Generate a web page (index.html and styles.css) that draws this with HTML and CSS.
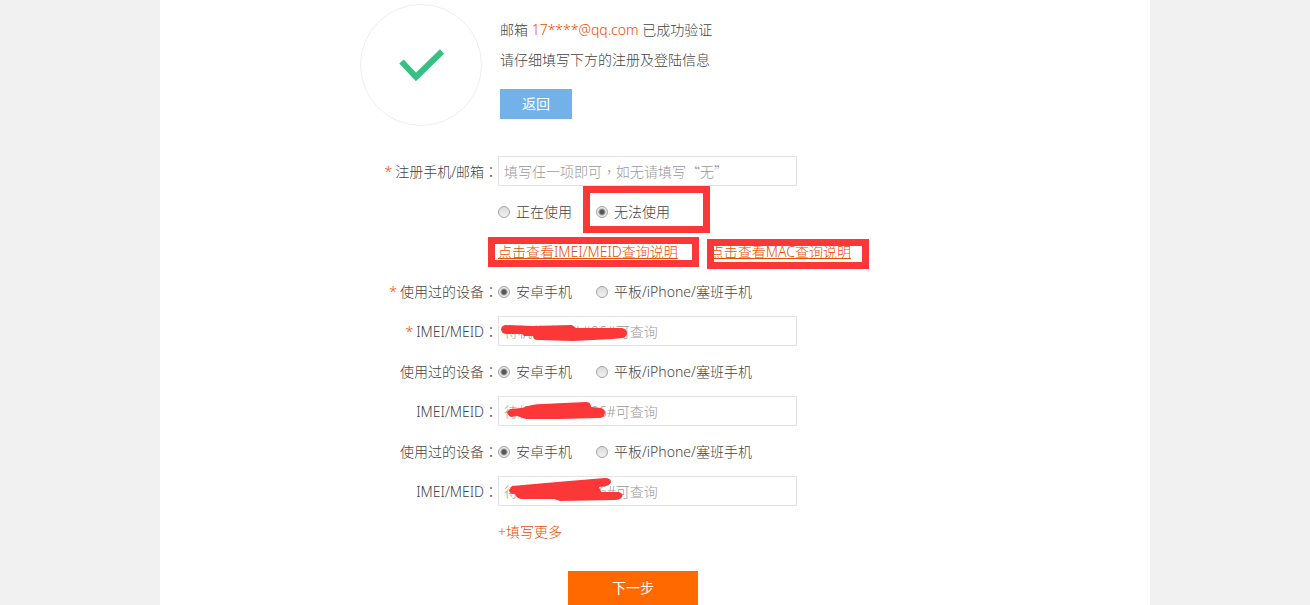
FILE: index.html
```html
<!DOCTYPE html>
<html lang="zh-CN">

<head>
    <meta charset="UTF-8">
    <meta name="viewport" content="width=device-width, initial-scale=1.0">
    <title>填写注册及登陆信息</title>
    <link rel="stylesheet" href="styles.css">
</head>

<body>
    <div class="container">
        <div class="verified">
            <svg class="verified-icon" viewBox="0 0 122 122" aria-hidden="true">
                <circle cx="61" cy="61" r="60.5" fill="#fff" stroke="#eee" />
                <path d="M41.500 57.500 L56 73 L82 47.500" fill="none" stroke="#35c184" stroke-width="6" />
            </svg>
            <div class="verified-text">
                <p>邮箱 <span class="orange">17****@qq.com</span> 已成功验证</p>
                <p>请仔细填写下方的注册及登陆信息</p>
                <button type="button" class="btn-back">返回</button>
            </div>
        </div>

        <form class="form">
            <div class="row">
                <label class="name" for="account"><i>*</i>注册手机/邮箱<b lang="zh-TW">：</b></label>
                <input type="text" class="text text-account" id="account" lang="zh-TW" placeholder="填写任一项即可，如无请填写“无”">
            </div>
            <div class="row">
                <span class="name"></span>
                <label class="option"><input type="radio" name="status">正在使用</label>
                <label class="option marked"><input type="radio" name="status" checked>无法使用<span class="mark mark-option"></span></label>
            </div>
            <div class="row">
                <span class="name"></span>
                <div class="links">
                    <a href="#" class="marked">点击查看IMEI/MEID查询说明<span class="mark mark-imei"></span></a>
                    <a href="#" class="marked">点击查看MAC查询说明<span class="mark mark-mac"></span></a>
                </div>
            </div>

            <div class="row">
                <span class="name"><i>*</i>使用过的设备<b lang="zh-TW">：</b></span>
                <label class="option"><input type="radio" name="device1" checked>安卓手机</label>
                <label class="option"><input type="radio" name="device1">平板/iPhone/塞班手机</label>
            </div>
            <div class="row">
                <label class="name" for="imei1"><i>*</i>IMEI/MEID<b lang="zh-TW">：</b></label>
                <div class="field">
                    <input type="text" class="text" id="imei1" placeholder="待机状态下*#06#可查询">
                    <svg class="scribble" viewBox="0 0 140 30" aria-hidden="true">
                        <path d="M7 9 L35 10 L74 9 L78 12 L124 12 Q129 13 129 17 Q129 21 125 22 L115 23 L75 25 L40 24 Q35 24 35 20 L26 20 L24 18 L9 18 Q4 18 3 14 Q3 10 7 9 Z" />
                    </svg>
                </div>
            </div>

            <div class="row">
                <span class="name">使用过的设备<b lang="zh-TW">：</b></span>
                <label class="option"><input type="radio" name="device2" checked>安卓手机</label>
                <label class="option"><input type="radio" name="device2">平板/iPhone/塞班手机</label>
            </div>
            <div class="row">
                <label class="name" for="imei2">IMEI/MEID<b lang="zh-TW">：</b></label>
                <div class="field">
                    <input type="text" class="text" id="imei2" placeholder="待机状态下*#06#可查询">
                    <svg class="scribble" viewBox="0 0 140 30" aria-hidden="true">
                        <path d="M12 13 L24 12 Q34 8 44 8 L88 6 Q93 6 93 11 L103 12 Q107 13 107 17 Q106 22 101 22 L62 23 L28 23 L19 20 L13 21 Q9 19 9 16 Z" />
                    </svg>
                </div>
            </div>

            <div class="row">
                <span class="name">使用过的设备<b lang="zh-TW">：</b></span>
                <label class="option"><input type="radio" name="device3" checked>安卓手机</label>
                <label class="option"><input type="radio" name="device3">平板/iPhone/塞班手机</label>
            </div>
            <div class="row">
                <label class="name" for="imei3">IMEI/MEID<b lang="zh-TW">：</b></label>
                <div class="field">
                    <input type="text" class="text" id="imei3" placeholder="待机状态下*#06#可查询">
                    <svg class="scribble" viewBox="0 0 140 30" aria-hidden="true">
                        <path d="M14 10 L59 6 L107 2 Q113 2 113 6 Q112 9 108 10 L101 11 L103 16 L121 16 Q126 18 124 21 Q122 24 117 24 L62 25 L56 23 L23 23 Q18 22 17 18 Q11 18 11 14 Z" />
                    </svg>
                </div>
            </div>

            <div class="row">
                <span class="name"></span>
                <a href="#" class="more">+填写更多</a>
            </div>
            <button type="submit" class="btn-next">下一步</button>
        </form>
    </div>
</body>

</html>
```
FILE: styles.css
```css
* {
    box-sizing: border-box;
}

body {
    margin: 0;
    background-color: #f1f1f1;
    color: #444;
    font-family: "Noto Sans", "Noto Sans CJK SC", sans-serif;
    font-size: 14px;
    font-weight: 300;
    line-height: 30px;
}

.container {
    max-width: 990px;
    min-height: 100vh;
    margin: 0 auto;
    padding: 4px 20px 0 200px;
    background-color: #fff;
}

.verified {
    display: flex;
    gap: 18px;
    margin-bottom: 30px;
}

.verified-icon {
    width: 122px;
    height: 122px;
}

.verified-text {
    padding-top: 11px;
}

.verified-text p {
    margin: 0;
}

.orange {
    color: #f04a00;
}

button {
    border: none;
    color: #fff;
    font: inherit;
    font-weight: 400;
    cursor: pointer;
}

.btn-back {
    display: block;
    width: 72px;
    height: 30px;
    margin-top: 14px;
    padding: 0;
    background-color: #72b2e9;
}

.row {
    display: flex;
    height: 30px;
    margin-bottom: 10px;
}

.name {
    width: 138px;
    padding-top: 1px;
    text-align: right;
}

.name i {
    margin-right: 3px;
    color: #f04a00;
    font-style: normal;
}

/* full-width colon sits in the middle of its box */
.name b {
    font-family: "Noto Sans CJK TC", sans-serif;
    font-weight: 300;
    line-height: 1;
}

.text {
    display: block;
    width: 299px;
    height: 30px;
    padding: 2px 5px 0;
    border: 1px solid #e3e3e3;
    color: #444;
    font: inherit;
}

.text-account {
    padding-top: 0;
    font-family: "Noto Sans CJK TC", sans-serif;
}

.text::placeholder {
    color: #999;
}

.option {
    display: flex;
    align-items: center;
    margin-right: 24px;
    padding-top: 2px;
}

.option input {
    appearance: none;
    width: 12px;
    height: 12px;
    margin: 0 6px 0 0;
    border: 1px solid #a5a5a5;
    border-radius: 50%;
    background: linear-gradient(#dcdcdc, #f0f0f0);
}

.option input:checked {
    background: radial-gradient(circle, #555 0, #555 2px, #e8e8e8 4px);
}

.links {
    display: flex;
    gap: 32px;
    padding-top: 1px;
}

.links a,
.more {
    color: #e85000;
}

.more {
    padding-top: 1px;
    text-decoration: none;
}

.field,
.marked {
    position: relative;
}

/* red frames round the important parts */
.mark {
    position: absolute;
    border: 7px solid #fc3737;
    pointer-events: none;
}

.mark-option {
    top: -10px;
    left: -13px;
    width: 127px;
    height: 47px;
}

.mark-imei {
    top: 0;
    left: -10px;
    width: 211px;
    height: 30px;
}

.mark-mac {
    top: 2px;
    left: -3px;
    width: 162px;
    height: 30px;
}

.scribble {
    position: absolute;
    top: 0;
    left: 0;
    width: 140px;
    height: 30px;
    fill: #fc3737;
    pointer-events: none;
}

.btn-next {
    display: block;
    width: 130px;
    height: 34px;
    margin: 25px 0 0 208px;
    background-color: #ff6900;
}
```
